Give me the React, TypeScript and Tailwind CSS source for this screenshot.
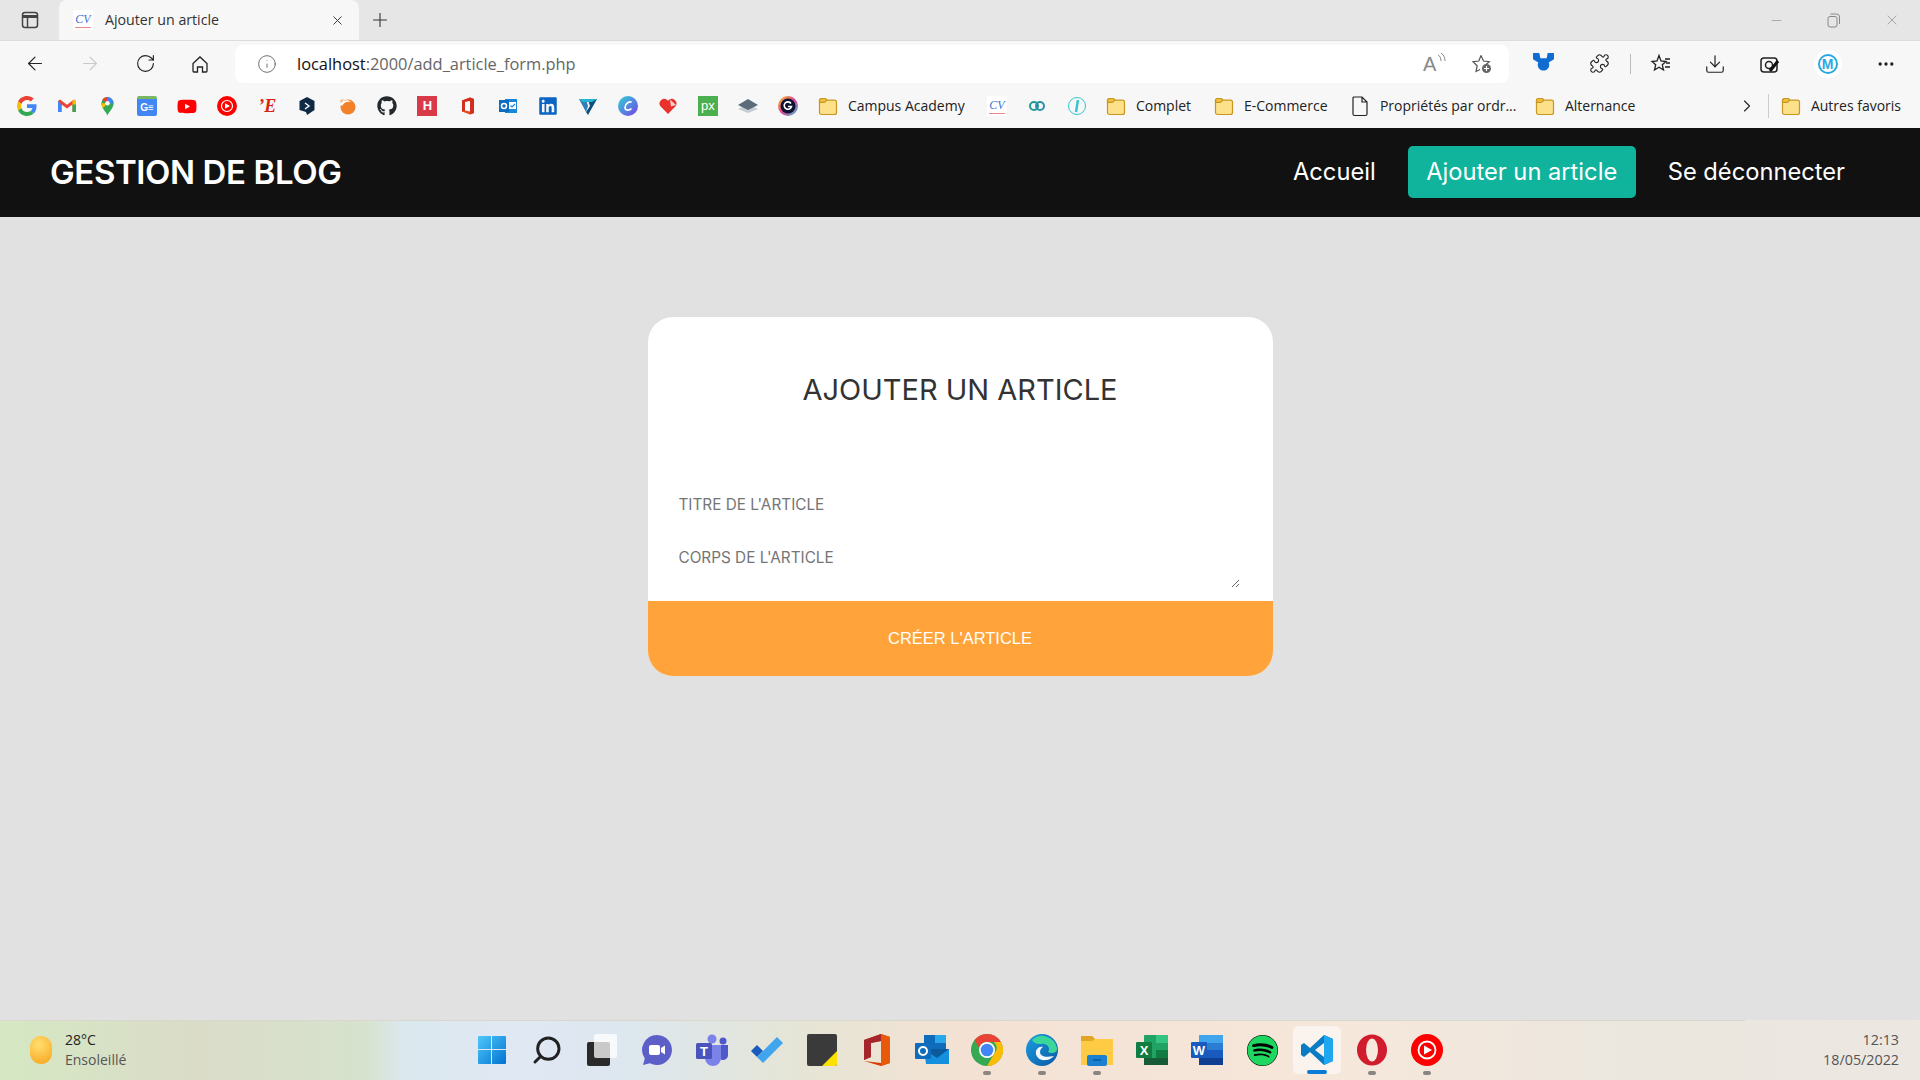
import { ArrowLeft, ArrowRight, RotateCw, Info, Puzzle, Download, MoreHorizontal, X, Minus, Plus, ChevronRight, Search } from "lucide-react";
import { FaGithub, FaLinkedin, FaYoutube, FaSpotify } from "react-icons/fa";

function Folder() {
  return (
    <svg width="20" height="20" viewBox="0 0 20 20" className="shrink-0">
      <path d="M1.5 4.5a2 2 0 0 1 2-2h3.2c.8 0 1.2.4 1.6 1l.5.7h7.7a2 2 0 0 1 2 2v10.3a2 2 0 0 1-2 2h-13a2 2 0 0 1-2-2z" fill="#fde08a" stroke="#c8971f" strokeWidth="1.2" />
      <path d="M1.5 6.4V4.5a2 2 0 0 1 2-2h3.2c.8 0 1.2.4 1.6 1l.5.7-1.6 1.6c-.4.4-.8.6-1.4.6z" fill="#f0c040" stroke="#c8971f" strokeWidth="1.2" />
    </svg>
  );
}

function CvIcon() {
  return (
    <span className="w-5 h-5 shrink-0 bg-white flex flex-col items-center justify-center leading-none">
      <span className="text-[12px] italic text-[#3f74d8] font-['Liberation_Serif',serif] leading-[13px]">CV</span>
      <span className="w-4 h-px bg-[#e88] mt-px" />
    </span>
  );
}

function Bookmark({ label, icon, w }: { label: string; icon: React.ReactNode; w: number }) {
  return (
    <div className="flex items-center gap-[10px] shrink-0" style={{ width: w }}>
      {icon}
      <span className="text-[14px] -mt-[2px] text-[#222] whitespace-nowrap">{label}</span>
    </div>
  );
}

const siteIcons: React.ReactNode[] = [
  <svg key="g" width="20" height="20" viewBox="0 0 48 48">
    <path fill="#EA4335" d="M24 9.5c3.5 0 6.700 1.200 9.200 3.600l6.900-6.900C35.900 2.400 30.500 0 24 0 14.600 0 6.500 5.400 2.600 13.200l8 6.200C12.500 13.700 17.800 9.500 24 9.500z" />
    <path fill="#4285F4" d="M46.900 24.500c0-1.600-.1-3.100-.4-4.500H24v9h12.900c-.6 3-2.200 5.500-4.700 7.200l7.700 6c4.500-4.200 7-10.300 7-17.700z" />
    <path fill="#FBBC05" d="M10.500 28.600c-.5-1.400-.8-3-.8-4.600s.3-3.200.8-4.600l-8-6.200C.9 16.500 0 20.100 0 24s.9 7.500 2.600 10.800z" />
    <path fill="#34A853" d="M24 48c6.500 0 11.900-2.100 15.900-5.800l-7.700-6c-2.200 1.500-4.900 2.300-8.200 2.300-6.200 0-11.500-4.200-13.400-9.900l-8 6.200C6.500 42.600 14.600 48 24 48z" />
  </svg>,
  <svg key="m" width="20" height="20" viewBox="0 0 20 20">
    <path d="M1 5v11h3.500V8.500L10 12.500l5.500-4V16H19V5l-2-1.500-7 5.200L3 3.500z" fill="#ea4335" />
    <path d="M1 5v11h3.500V8.500z" fill="#4285f4" />
    <path d="M19 5v11h-3.500V8.500z" fill="#34a853" />
    <path d="M15.500 4.800 17 3.500 19 5v3.500h-3.500z" fill="#fbbc04" />
  </svg>,
  <svg key="maps" width="15" height="20" viewBox="3.500 1.500 13 18">
    <path d="M10 19c-1-3-5.500-6.500-5.500-11a5.500 5.500 0 0 1 11 0C15.500 12.500 11 16 10 19z" fill="#34a853" />
    <path d="M5.200 5.200A5.500 5.500 0 0 1 10 2.500V8z" fill="#ea4335" />
    <path d="M10 2.500A5.500 5.500 0 0 1 15.500 8H10z" fill="#4285f4" />
    <path d="M4.500 8c0 1.800.6 3.200 1.400 4.500L10 8z" fill="#fbbc04" />
    <circle cx="10" cy="8" r="2" fill="#fff" />
  </svg>,
  <div key="ge" className="w-5 h-5 rounded-[2px] bg-[#4285f4] border-t-[3px] border-[#7bb661] flex items-center justify-center text-white text-[10px] font-bold font-['Liberation_Sans',sans-serif]">G≡</div>,
  <FaYoutube key="yt" size={21} color="#f00" />,
  <svg key="ytm" width="20" height="20" viewBox="0 0 20 20">
    <circle cx="10" cy="10" r="10" fill="#f00" />
    <circle cx="10" cy="10" r="5.500" fill="none" stroke="#fff" strokeWidth="1.200" />
    <path d="M8 7.200 13 10l-5 2.800z" fill="#fff" />
  </svg>,
  <span key="e" className="w-5 text-center text-[18px] leading-5 font-bold italic text-[#d8230f] font-['Liberation_Serif',serif]">’E</span>,
  <svg key="dash" width="20" height="20" viewBox="0 0 20 20">
    <path d="M10 1 17.500 5v9L10 19l-1-3-6.500-2V5z" fill="#0e2a44" />
    <path d="M8 7l4 3-4 3" fill="none" stroke="#fff" strokeWidth="1.400" />
  </svg>,
  <svg key="orange" width="20" height="20" viewBox="0 0 20 20">
    <circle cx="11" cy="11" r="7.500" fill="#f2812a" />
    <path d="M3 8c3-4 8-5 11-2-4-1-7 0-9 4z" fill="#fff" />
    <path d="M3 5c1-1 2-2 4-2L4 7z" fill="#f7b27a" />
  </svg>,
  <FaGithub key="gh" size={20} color="#24292e" />,
  <div key="h" className="w-5 h-5 bg-[#d93a48] flex items-center justify-center text-white text-[13px] font-bold font-['Liberation_Sans',sans-serif]">H</div>,
  <svg key="o" width="20" height="20" viewBox="0 0 20 20">
    <path d="M4 4.500 12 1.500l4 1.500v14l-4 1.500-8-3z" fill="#e64a19" />
    <path d="M12 1.500 4 4.500v11l3-1.200V6l5-1v13.500l4-1.500V3z" fill="#d32f1f" />
    <path d="M7 6v8.500l5 1V5z" fill="#fff" />
  </svg>,
  <svg key="ol" width="20" height="20" viewBox="0 0 20 20">
    <rect x="7" y="3" width="12" height="14" fill="#1a86d9" />
    <rect x="11" y="6" width="7" height="7" fill="#fff" />
    <path d="m12.500 9.500 1.500 1.500 3-3" stroke="#1a86d9" strokeWidth="1.200" fill="none" />
    <rect x="1" y="4" width="10" height="12" fill="#0f6cbd" />
    <circle cx="6" cy="10" r="2.500" fill="none" stroke="#fff" strokeWidth="1.500" />
  </svg>,
  <FaLinkedin key="li" size={20} color="#0a66c2" />,
  <svg key="v" width="20" height="20" viewBox="0 0 20 20">
    <path d="M1 3h7l2 7-2 6z" fill="#2f7fb8" />
    <path d="M19 3h-8l-1 1 2 6-4 6 2 3z" fill="#0e4f7d" />
    <path d="M1 3h18l-5 3H5z" fill="#23b5d3" />
  </svg>,
  <svg key="c" width="20" height="20" viewBox="0 0 20 20">
    <defs>
      <linearGradient id="canva" x1="0" y1="0" x2="1" y2="1">
        <stop offset="0" stopColor="#2bd4d8" />
        <stop offset="1" stopColor="#7a3fe6" />
      </linearGradient>
    </defs>
    <circle cx="10" cy="10" r="10" fill="url(#canva)" />
    <path d="M13.500 6.500C12 4.500 7 7.500 7 11.500c0 3 4 3.500 6.500 1" fill="none" stroke="#fff" strokeWidth="1.700" />
  </svg>,
  <svg key="heart" width="20" height="20" viewBox="0 0 20 20">
    <path d="M10 18 2.200 10A4.700 4.700 0 0 1 9 3.800l1 1 1-1A4.700 4.700 0 0 1 17.800 10z" fill="#e8322e" />
    <path d="M12 3.500 18 9l-5 1.500z" fill="#f7d0cc" />
  </svg>,
  <div key="px" className="w-5 h-5 bg-[#4caf50] flex items-center justify-center text-white text-[13px] font-['Liberation_Sans',sans-serif]">px</div>,
  <svg key="layers" width="20" height="20" viewBox="0 0 20 20">
    <path d="M10 8 20 13l-10 4L0 13z" fill="#c6ccd2" />
    <path d="M10 3 20 9l-10 5L0 9z" fill="#5b6b7a" />
  </svg>,
  <svg key="gc" width="20" height="20" viewBox="0 0 20 20">
    <defs>
      <linearGradient id="ring" x1="0" y1="0" x2="1" y2="1">
        <stop offset="0" stopColor="#f5c518" />
        <stop offset=".5" stopColor="#e0409a" />
        <stop offset="1" stopColor="#32c5d2" />
      </linearGradient>
    </defs>
    <circle cx="10" cy="10" r="10" fill="url(#ring)" />
    <circle cx="10" cy="10" r="7.500" fill="#0c1230" />
    <path d="M13 7.500a3.700 3.700 0 1 0 .5 3H10" fill="none" stroke="#fff" strokeWidth="1.600" />
  </svg>,
];

function BrowserChrome() {
  return (
    <div className="shrink-0 bg-[#f7f7f7] font-['Open_Sans',sans-serif]">
      <div className="h-10 bg-[#e6e6e6] flex items-end">
        <div className="w-[59px] h-10 flex items-center justify-center">
          <svg width="20" height="20" viewBox="0 0 20 20" fill="none" stroke="#444" strokeWidth="1.500">
            <rect x="2.500" y="2.500" width="15" height="15" rx="2.500" />
            <path d="M2.500 6.500h15" strokeWidth="3" />
            <path d="M7.500 6v11" />
          </svg>
        </div>
        <div className="w-[300px] h-10 bg-[#f7f7f7] rounded-t-lg flex items-center pl-[14px] pr-[14px]">
          <CvIcon />
          <span className="ml-[12px] -mt-[1px] text-[14.200px] text-[#333] flex-1">Ajouter un article</span>
          <X size={15} strokeWidth={1.500} color="#333" />
        </div>
        <div className="w-[40px] h-10 ml-[1px] flex items-center justify-center">
          <Plus size={22} strokeWidth={1.200} color="#333" />
        </div>
        <div className="flex-1" />
        <div className="h-10 flex items-center gap-[43px] pr-[20px] text-[#888]">
          <Minus size={15} strokeWidth={1} />
          <svg width="14" height="15" viewBox="0 0 14 15" fill="none" stroke="#888">
            <rect x="1" y="3.500" width="9" height="10.500" rx="2" />
            <path d="M3.500 1h6a3 3 0 0 1 3 3v7" />
          </svg>
          <X size={16} strokeWidth={1} />
        </div>
      </div>

      <div className="h-[46px] flex items-start border-t border-[#dcdcdc]">
        <div className="w-[235px] h-[45px] flex items-center pl-[24px] gap-[33px] shrink-0">
          <div className="w-[22px] flex justify-center"><ArrowLeft size={23} strokeWidth={1.300} color="#222" /></div>
          <div className="w-[22px] flex justify-center"><ArrowRight size={23} strokeWidth={1.300} color="#c8c8c8" /></div>
          <div className="w-[22px] flex justify-center"><RotateCw size={21} strokeWidth={1.300} color="#222" /></div>
          <div className="w-[22px] flex justify-center">
            <svg width="20" height="20" viewBox="0 0 20 20" fill="none" stroke="#222" strokeWidth="1.300">
              <path d="M3 9.500 10 3l7 6.500V17a1 1 0 0 1-1 1h-3.500v-5h-5v5H4a1 1 0 0 1-1-1z" />
            </svg>
          </div>
        </div>
        <div className="w-[1274px] h-[38px] mt-[4px] bg-white rounded-lg flex items-center pl-[22px] pr-[16px] shrink-0">
          <Info size={20} strokeWidth={1} color="#555" />
          <span className="ml-[20px] text-[16.400px] text-[#111] flex-1">
            localhost<span className="text-[#666]">:2000/add_article_form.php</span>
          </span>
          <div className="relative w-[24px] h-[22px] mr-[24px] flex items-center">
            <span className="text-[20px] leading-none text-[#888] font-['Liberation_Sans',sans-serif]">A</span>
            <svg width="10" height="12" viewBox="0 0 10 12" fill="none" stroke="#888" className="absolute right-0 top-0">
              <path d="M1 2c2 1 3 3 3 6M4 0c3 2 4 5 4 8" />
            </svg>
          </div>
          <svg width="22" height="22" viewBox="0 0 22 22" fill="none" stroke="#555" strokeWidth="1.200">
            <path d="M10 2.500 12.500 8l5.800.6-4.300 3.900" />
            <path d="M9 16.500l-4 2 1.200-5.800L2 8.600 7.800 8 10 2.500" />
            <circle cx="15.500" cy="15.500" r="4.500" fill="#666" stroke="none" />
            <path d="M15.500 13v5M13 15.500h5" stroke="#fff" />
          </svg>
        </div>
        <div className="h-[45px] flex items-center ml-[6.500px]">
          <div className="w-[56px] flex justify-center">
            <svg width="21" height="22" viewBox="0 0 20 21">
              <path d="M0 0h6l1 5h6l1-5h6v6l-5 3a5.500 5.500 0 1 1-10 0L0 6z" fill="#0f6cd0" />
            </svg>
          </div>
          <div className="w-[56px] flex justify-center"><Puzzle size={21} strokeWidth={1.300} color="#222" /></div>
          <div className="w-[6px] flex justify-center"><div className="w-px h-5 bg-[#bbb]" /></div>
          <div className="w-[54px] flex justify-center">
            <svg width="22" height="22" viewBox="0 0 22 22" fill="none" stroke="#222" strokeWidth="1.300">
              <path d="M9 2.500 11 8l5 .5-3.700 3.300L13.500 17 9 14.300 4.500 17l1.200-5.200L2 8.500 7 8z" />
              <path d="M15 6h5M16 10h4M15 14h5" />
            </svg>
          </div>
          <div className="w-[55px] flex justify-center"><Download size={22} strokeWidth={1.300} color="#222" /></div>
          <div className="w-[55px] flex justify-center">
            <svg width="22" height="22" viewBox="0 0 22 22" fill="none" stroke="#222" strokeWidth="1.500">
              <rect x="2" y="5" width="16" height="14" rx="3" />
              <circle cx="10" cy="12" r="3.500" />
              <path d="M11 18 19 8" stroke="#111" strokeWidth="3" />
            </svg>
          </div>
          <div className="w-[60px] flex justify-center">
            <div className="w-7 h-7 rounded-full bg-white flex items-center justify-center">
              <span className="w-[20px] h-[20px] rounded-full border-2 border-[#29a9e0] flex items-center justify-center text-[#29a9e0] text-[14px] leading-none font-bold font-['Liberation_Sans',sans-serif]">M</span>
            </div>
          </div>
          <div className="w-[56px] flex justify-center"><MoreHorizontal size={20} strokeWidth={2} color="#222" /></div>
        </div>
      </div>

      <div className="h-[42px] flex items-center pl-[17px] pb-[2px]">
        <div className="flex items-center gap-[20.050px] shrink-0">
          {siteIcons.map((icon, i) => (
            <div key={i} className="w-5 h-5 flex items-center justify-center">{icon}</div>
          ))}
        </div>
        <div className="ml-[20px] flex items-center shrink-0">
          <Bookmark label="Campus Academy" icon={<Folder />} w={169} />
          <div className="flex items-center gap-[20px] w-[119px]">
            <CvIcon />
            <svg width="20" height="20" viewBox="0 0 20 20" fill="none" stroke="#1f9c90" strokeWidth="2">
              <circle cx="7" cy="10" r="4" />
              <circle cx="13" cy="10" r="4" stroke="#2b8fa8" />
            </svg>
            <svg width="20" height="20" viewBox="0 0 20 20" fill="none" stroke="#35c6d0">
              <circle cx="10" cy="10" r="8.500" />
              <path d="M11 4 9 16" strokeWidth="2.500" />
            </svg>
          </div>
          <Bookmark label="Complet" icon={<Folder />} w={108} />
          <Bookmark label="E-Commerce" icon={<Folder />} w={136} />
          <div className="flex items-center gap-[10px] w-[185px]">
            <svg width="20" height="22" viewBox="0 0 20 22" fill="none" stroke="#222" strokeWidth="1.200" className="shrink-0">
              <path d="M4 2h8l5 5v12a1.500 1.500 0 0 1-1.500 1.500h-11A1.500 1.500 0 0 1 3 19V3a1 1 0 0 1 1-1zM12 2v5h5" />
            </svg>
            <span className="text-[14px] -mt-[2px] text-[#222] whitespace-nowrap">Propriétés par ordr...</span>
          </div>
          <Bookmark label="Alternance" icon={<Folder />} w={202} />
          <ChevronRight size={20} strokeWidth={1.300} color="#222" />
          <div className="w-px h-6 bg-[#ccc] ml-[11px] mr-[12px]" />
          <Bookmark label="Autres favoris" icon={<Folder />} w={130} />
        </div>
      </div>
    </div>
  );
}

function ArticleForm() {
  return (
    <form className="w-[625px] h-[359px] mt-[100px] bg-white rounded-[25px] overflow-hidden flex flex-col font-['Inter',sans-serif]">
      <h1 className="text-center text-[29px] leading-[40px] text-[#333] font-normal pt-[53px]">AJOUTER UN ARTICLE</h1>
      <div className="flex-1 min-h-0 flex flex-col pl-[31px] pr-[33px] pt-[81px]">
        <input
          className="h-[26px] text-[15.300px] outline-none placeholder:text-[#757575] bg-transparent"
          placeholder="TITRE DE L'ARTICLE"
        />
        <textarea
          rows={1}
          className="mt-[28px] flex-1 min-h-0 mb-[13px] text-[15.300px] leading-[26px] outline-none placeholder:text-[#757575] bg-transparent"
          placeholder="CORPS DE L'ARTICLE"
        />
      </div>
      <button type="button" className="h-[75px] shrink-0 bg-[#ffa33a] text-white text-[16.500px] font-['Liberation_Sans',sans-serif]">CRÉER L'ARTICLE</button>
    </form>
  );
}

function TaskIcon({ children, dot, active }: { children: React.ReactNode; dot?: boolean; active?: boolean }) {
  return (
    <div className={`relative w-[48px] h-[48px] rounded-[5px] flex items-center justify-center ${active ? "bg-white/50" : ""}`}>
      {children}
      {dot && <span className="absolute bottom-[-1px] left-1/2 -translate-x-1/2 w-[8px] h-[4px] rounded-full bg-[#8a8580]" />}
      {active && <span className="absolute bottom-0 left-1/2 -translate-x-1/2 w-[20px] h-[4px] rounded-full bg-[#0a7cd8]" />}
    </div>
  );
}

function Taskbar() {
  return (
    <div className="h-[60px] shrink-0 relative flex items-center font-['Open_Sans',sans-serif] bg-[linear-gradient(90deg,#d5e8c3_0%,#dadcc8_10%,#d6e2cd_19%,#dbe8ee_21%,#e0e8f4_27%,#dde7ee_33%,#e6e5d5_42%,#f3e2d4_50%,#f6e7db_70%,#ebe7df_85%,#ece7e1_100%)]">
      <div className="absolute top-0 left-0 w-[1745px] h-px bg-[#d8d8cc]" />
      <div className="absolute left-[30px] w-[22px] h-[28px] rounded-full bg-[radial-gradient(circle_at_40%_30%,#ffdf6e,#f9a11b)]" />
      <div className="ml-[65px] w-[385px] shrink-0 text-[14px] leading-[20px]">
        <div className="text-[#222]">28°C</div>
        <div className="text-[#555]">Ensoleillé</div>
      </div>
      <div className="ml-[18px] flex items-center gap-[7px]">
        <TaskIcon>
          <svg width="30" height="30" viewBox="0 0 30 30">
            <defs>
              <linearGradient id="win" x1="0" y1="0" x2="1" y2="1">
                <stop offset="0" stopColor="#4fc8fb" />
                <stop offset="1" stopColor="#0272d0" />
              </linearGradient>
            </defs>
            <path d="M1 2a1 1 0 0 1 1-1h12v13H1zM15 1h13a1 1 0 0 1 1 1v12H15zM1 15h13v14H2a1 1 0 0 1-1-1zM15 15h14v13a1 1 0 0 1-1 1H15z" fill="url(#win)" />
          </svg>
        </TaskIcon>
        <TaskIcon>
          <Search size={32} strokeWidth={2.200} color="#222" className="-scale-x-100" />
        </TaskIcon>
        <TaskIcon>
          <div className="relative w-[30px] h-[32px]">
            <div className="absolute left-0 bottom-0 w-[23px] h-[24px] rounded-[2px] bg-[#2a2a2a]" />
            <div className="absolute right-0 top-0 w-[23px] h-[24px] rounded-[2px] bg-white/75" />
          </div>
        </TaskIcon>
        <TaskIcon>
          <svg width="32" height="32" viewBox="0 0 32 32">
            <path d="M16 1a15 15 0 1 1-7 28.300L2 31l1.800-6.500A15 15 0 0 1 16 1z" fill="#5b5fc7" />
            <rect x="8" y="11" width="11" height="10" rx="2" fill="#fff" />
            <path d="m20 14 4-2.500v9L20 18z" fill="#fff" />
          </svg>
        </TaskIcon>
        <TaskIcon>
          <svg width="34" height="32" viewBox="0 0 34 32">
            <circle cx="17" cy="5" r="4.500" fill="#7b83eb" />
            <circle cx="28" cy="7" r="3.500" fill="#5059c9" />
            <path d="M24 11h9v10a5 5 0 0 1-9 3z" fill="#5059c9" />
            <path d="M10 11h16v13a8 8 0 0 1-16 0z" fill="#7b83eb" />
            <rect x="1" y="9" width="16" height="16" rx="1.500" fill="#4b53bc" />
            <text x="9" y="22" textAnchor="middle" fontSize="13" fontWeight="700" fill="#fff" fontFamily="Liberation Sans">T</text>
          </svg>
        </TaskIcon>
        <TaskIcon>
          <svg width="34" height="28" viewBox="0 0 34 28">
            <path d="M1 15 7 9l6 6-6 6z" fill="#185abd" />
            <path d="M13 27 7 21 27 1l6 6z" fill="#41a5ee" />
          </svg>
        </TaskIcon>
        <TaskIcon>
          <div className="relative w-[30px] h-[32px] rounded-[2px] bg-[#3a3a3a] overflow-hidden">
            <div className="absolute right-0 bottom-0 border-l-[15px] border-b-[15px] border-l-transparent border-b-[#fce100]" />
          </div>
        </TaskIcon>
        <TaskIcon>
          <svg width="28" height="34" viewBox="0 0 28 34">
            <path d="M1 7 18 1l9 3v26l-9 3-17-5 17 2V8L8 10v14l-7 3z" fill="#d83b01" />
            <path d="M1 7 18 1v7L8 10v14l-7 3z" fill="#a4262c" />
            <path d="M18 1l9 3v26l-9 3z" fill="#e8590c" />
          </svg>
        </TaskIcon>
        <TaskIcon>
          <svg width="34" height="32" viewBox="0 0 34 32">
            <rect x="9" y="1" width="22" height="16" fill="#0f6cbd" />
            <rect x="20" y="1" width="11" height="8" fill="#28a8ea" />
            <path d="M9 15h25v15H11z" fill="#1490df" />
            <path d="m9 15 13 9 12-9" fill="#0a5a9c" />
            <rect x="0" y="9" width="16" height="16" rx="1" fill="#0f6cbd" />
            <circle cx="8" cy="17" r="4" fill="none" stroke="#fff" strokeWidth="2" />
          </svg>
        </TaskIcon>
        <TaskIcon dot>
          <svg width="32" height="32" viewBox="0 0 32 32">
            <circle cx="16" cy="16" r="16" fill="#34a853" />
            <path d="M16 0a16 16 0 0 1 13.900 8H16a8 8 0 0 0-7.700 6L3.500 6A16 16 0 0 1 16 0z" fill="#ea4335" />
            <path d="M29.900 8A16 16 0 0 1 16 32l7-12a8 8 0 0 0 0-12z" fill="#fbbc05" />
            <circle cx="16" cy="16" r="8" fill="#fff" />
            <circle cx="16" cy="16" r="6.300" fill="#4285f4" />
          </svg>
        </TaskIcon>
        <TaskIcon dot>
          <svg width="32" height="32" viewBox="0 0 32 32">
            <defs>
              <linearGradient id="edge" x1="0" y1="0" x2="1" y2="1">
                <stop offset="0" stopColor="#1b9de2" />
                <stop offset="1" stopColor="#0c59a4" />
              </linearGradient>
            </defs>
            <circle cx="16" cy="16" r="16" fill="url(#edge)" />
            <path d="M6 6a15 15 0 0 1 25 8c1 5-6 6-9 4 3-4-1-9-7-8C10 10 8 9 6 6z" fill="#3ad69a" />
            <path d="M20 26c-6 1-11-3-10-9 1-3 4-5 7-4-2 1-3 3-3 5 0 4 5 6 14 4-2 2-5 4-8 4z" fill="#f3f8fc" />
          </svg>
        </TaskIcon>
        <TaskIcon dot>
          <svg width="32" height="32" viewBox="0 0 32 32">
            <path d="M0 2h11l3 3h18v26H0z" fill="#ffcb45" />
            <path d="M0 2h11l3 3-3 2H0z" fill="#e0a526" />
            <rect x="6" y="21" width="20" height="11" rx="2" fill="#1b80d0" />
            <path d="M12 26h8" stroke="#0a5a9c" strokeWidth="1.500" />
          </svg>
        </TaskIcon>
        <TaskIcon>
          <svg width="32" height="32" viewBox="0 0 32 32">
            <rect x="8" y="1" width="24" height="30" rx="1" fill="#21a366" />
            <rect x="20" y="1" width="12" height="8" fill="#33c481" />
            <rect x="20" y="16" width="12" height="8" fill="#107c41" />
            <rect x="8" y="24" width="24" height="7" fill="#185c37" />
            <rect x="0" y="8" width="16" height="16" rx="1" fill="#107c41" />
            <text x="8" y="21" textAnchor="middle" fontSize="13" fontWeight="700" fill="#fff" fontFamily="Liberation Sans">X</text>
          </svg>
        </TaskIcon>
        <TaskIcon>
          <svg width="32" height="32" viewBox="0 0 32 32">
            <rect x="8" y="1" width="24" height="30" rx="1" fill="#2b7cd3" />
            <rect x="8" y="1" width="24" height="8" fill="#41a5ee" />
            <rect x="8" y="16" width="24" height="8" fill="#185abd" />
            <rect x="8" y="24" width="24" height="7" fill="#103f91" />
            <rect x="0" y="8" width="16" height="16" rx="1" fill="#185abd" />
            <text x="8" y="21" textAnchor="middle" fontSize="13" fontWeight="700" fill="#fff" fontFamily="Liberation Sans">W</text>
          </svg>
        </TaskIcon>
        <TaskIcon>
          <FaSpotify size={31} color="#1ed760" className="bg-black rounded-full" />
        </TaskIcon>
        <TaskIcon active>
          <svg width="32" height="32" viewBox="0 0 32 32">
            <path d="M23 1 32 5v22l-9 4L9 18l-6 5-3-2v-10l3-2 6 5z" fill="#0a7cc4" />
            <path d="M23 1 32 5v22l-9 4z" fill="#1fa7f0" />
            <path d="M23 9v14l-9-7z" fill="#f7efe9" />
          </svg>
        </TaskIcon>
        <TaskIcon dot>
          <svg width="30" height="32" viewBox="0 0 30 32">
            <ellipse cx="15" cy="16" rx="15" ry="15.500" fill="#d01c2c" />
            <ellipse cx="15" cy="16" rx="6" ry="11.500" fill="#f7e9de" />
          </svg>
        </TaskIcon>
        <TaskIcon dot>
          <svg width="32" height="32" viewBox="0 0 32 32">
            <circle cx="16" cy="16" r="16" fill="#f00" />
            <circle cx="16" cy="16" r="8.500" fill="none" stroke="#fff" strokeWidth="1.800" />
            <path d="M13 11.500 21 16l-8 4.500z" fill="#fff" />
          </svg>
        </TaskIcon>
      </div>
      <div className="absolute right-[21px] top-[10px] text-right text-[14.300px] leading-[20px] text-[#555]">
        <div>12:13</div>
        <div>18/05/2022</div>
      </div>
    </div>
  );
}

export default function App() {
  return (
    <div className="w-[1920px] h-[1080px] overflow-hidden flex flex-col bg-[#e1e1e1]">
      <BrowserChrome />
      <nav className="h-[89px] shrink-0 bg-[#111] flex items-center justify-between pl-[50px] pr-[75px] font-['Inter',sans-serif] text-white">
        <div className="text-[33px] font-semibold tracking-[-0.400px]">GESTION DE BLOG</div>
        <div className="flex items-center text-[23.700px] -mt-[2px]">
          <a>Accueil</a>
          <a className="ml-[32px] h-[52px] w-[228px] rounded-[5px] bg-[#10b39b] flex items-center justify-center">Ajouter un article</a>
          <a className="ml-[32px]">Se déconnecter</a>
        </div>
      </nav>
      <main className="flex-1 flex justify-center items-start">
        <ArticleForm />
      </main>
      <Taskbar />
    </div>
  );
}
